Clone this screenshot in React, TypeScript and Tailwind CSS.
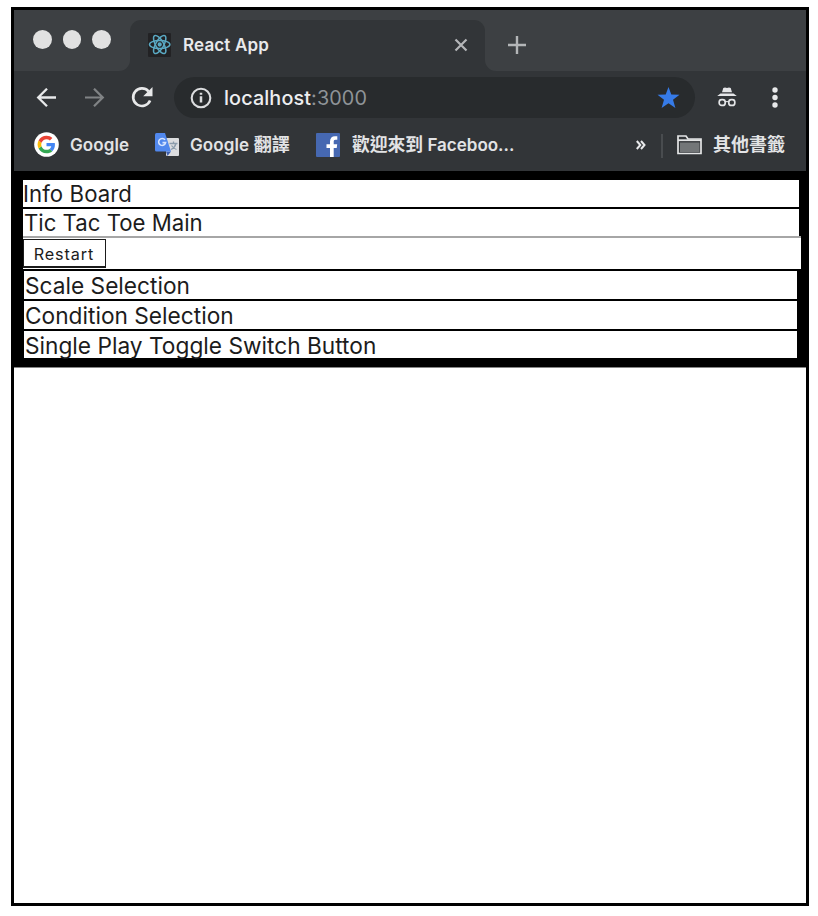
import React from "react";

function ReactLogo() {
  return (
    <svg width="23" height="24" viewBox="0 0 23 24" className="shrink-0">
      <rect width="23" height="24" rx="1" fill="#222224" />
      <g fill="none" stroke="#5aa9c3" strokeWidth="1.5" transform="translate(11.7 11.5)">
        <ellipse rx="10.2" ry="4" />
        <ellipse rx="10.2" ry="4" transform="rotate(60)" />
        <ellipse rx="10.2" ry="4" transform="rotate(120)" />
        <circle r="1.4" fill="#5aa9c3" />
      </g>
    </svg>
  );
}

function TabStrip() {
  return (
    <div className="flex h-[61px] bg-[#3d4043]">
      <div className="flex w-[116px] bg-[#323538]">
        <div className="flex h-[61px] w-[116px] gap-[11px] rounded-br-[11px] bg-[#3d4043] pl-[19px] pt-5">
          <span className="size-[18.5px] rounded-full bg-[#e1e1e1]" />
          <span className="size-[18.5px] rounded-full bg-[#e1e1e1]" />
          <span className="size-[18.5px] rounded-full bg-[#e1e1e1]" />
        </div>
      </div>
      <div className="mt-[10px] flex w-[355px] items-start rounded-t-[11px] bg-[#323538] pl-[18px] pt-[13px]">
        <ReactLogo />
        <span className="ml-3 mt-[1px] text-[17px] leading-[23px] font-semibold tracking-[0.15px] text-[#e9eaec]">React App</span>
        <svg width="14" height="14" viewBox="0 0 14 14" className="ml-auto mr-[17px] mt-[5px]" stroke="#b4b6b8" strokeWidth="2.2" fill="none">
          <path d="M1.5 1.5l11 11M12.5 1.5l-11 11" />
        </svg>
      </div>
      <div className="flex-1 bg-[#323538]">
        <div className="h-[61px] rounded-bl-[11px] bg-[#3d4043] pl-[23px] pt-[26px]">
          <svg width="18" height="18" viewBox="0 0 18 18" stroke="#b4b6b8" strokeWidth="2.4">
            <path d="M0 9h18M9 0v18" />
          </svg>
        </div>
      </div>
    </div>
  );
}

function Toolbar() {
  return (
    <div className="flex h-[53px] items-center bg-[#323538] pl-[22px]">
      <svg width="21" height="20" viewBox="0 0 21 20" fill="none" stroke="#e8e9ea" strokeWidth="2.3">
        <path d="M20 9.5H2.5M11 .7L2.2 9.5l8.8 8.8" />
      </svg>
      <svg width="21" height="20" viewBox="0 0 21 20" fill="none" stroke="#808385" strokeWidth="2.2" className="ml-[27px]">
        <path d="M1 9.5h17.5M10 .7l8.8 8.8-8.8 8.8" />
      </svg>
      <svg width="23" height="22" viewBox="0 0 23 22" fill="none" className="ml-[26px]">
        <path d="M17.5 4.3A8.8 8.8 0 1 0 19.1 13.6" stroke="#e8e9ea" strokeWidth="2.6" />
        <path d="M21.5 0v9.3h-9.3z" fill="#e8e9ea" />
      </svg>
      <div className="ml-5 flex h-[41px] w-[521px] items-center rounded-full bg-[#282b2d] pl-4">
        <svg width="22" height="22" viewBox="0 0 22 22" fill="none" stroke="#dcdddf" strokeWidth="2.1">
          <circle cx="11" cy="11" r="9.3" />
          <path d="M11 9.3v6.2M11 5.8v2" strokeWidth="2.5" />
        </svg>
        <span className="ml-[12px] text-[19.8px] leading-6 tracking-[0.12px] text-[#8f9498]">
          <span className="font-medium text-[#edeef0]">localhost</span>:3000
        </span>
        <svg width="23" height="22" viewBox="0 0 23 22" className="ml-auto mr-[15px]">
          <path d="M11.5 0l2.8 7.6 8.2.2-6.5 5 2.4 8.1-6.9-4.7-6.9 4.7L7 12.8.5 7.8l8.2-.2z" fill="#367be8" />
        </svg>
      </div>
      <svg width="20" height="21" viewBox="0 0 20 21" className="ml-[22px]" fill="none">
        <path d="M5 5.2L6.3 1 8 .5l2 .6 2-.6 1.7.5L15 5.2zM.2 9l3.3-2.500h13L19.8 9z" fill="#e5e6e8" />
        <g stroke="#e5e6e8" strokeWidth="1.7">
          <rect x="2.2" y="12.6" width="6" height="5.8" rx="2.5" />
          <rect x="11.8" y="12.6" width="6" height="5.8" rx="2.5" />
          <path d="M8 15q2-1 4 0" strokeWidth="1.2" />
        </g>
      </svg>
      <svg width="6" height="22" viewBox="0 0 6 22" fill="#e8e9ea" className="ml-[35px]">
        <circle cx="3" cy="3" r="2.7" />
        <circle cx="3" cy="10.5" r="2.7" />
        <circle cx="3" cy="18" r="2.7" />
      </svg>
    </div>
  );
}

function GoogleIcon() {
  return (
    <svg width="25" height="25" viewBox="0 0 25 25" className="shrink-0">
      <circle cx="12.5" cy="12.5" r="12.3" fill="#fff" />
      <g transform="translate(3.7 3.7) scale(.733)">
        <path fill="#4285f4" d="M23.5 12.3c0-.9-.1-1.5-.2-2.3H12v4.5h6.5c-.3 1.5-1.1 2.8-2.5 3.6l3.8 3c2.3-2.1 3.7-5.2 3.7-8.8z" />
        <path fill="#34a853" d="M12 24c3.2 0 6-1.1 7.9-2.9l-3.8-3c-1.1.7-2.4 1.2-4.1 1.2-3.1 0-5.8-2.1-6.8-5l-4 3.1C3.2 21.3 7.3 24 12 24z" />
        <path fill="#fbbc05" d="M5.2 14.3a7.2 7.2 0 0 1 0-4.6l-4-3.1a12 12 0 0 0 0 10.8z" />
        <path fill="#ea4335" d="M12 4.7c1.8 0 3.3.6 4.6 1.8L20 3.1C17.9 1.2 15.2 0 12 0 7.3 0 3.2 2.7 1.2 6.6l4 3.1c1-2.9 3.7-5 6.8-5z" />
      </g>
    </svg>
  );
}

function TranslateIcon() {
  return (
    <svg width="24" height="24" viewBox="0 0 24 24" className="shrink-0">
      <rect x="11" y="5" width="13" height="18" rx="1" fill="#dcdddf" />
      <path d="M14.5 10.5h8M18.5 8.5v2M21 10.5q-1 4-5 6M16.5 12.5q2 3 5 4" stroke="#8c9cab" strokeWidth="1.3" fill="none" />
      <path d="M11 18.5h5L12.5 23z" fill="#3e5fae" />
      <path d="M1.5 0H10l6 18.5H1.5Q0 18.5 0 17V1.5Q0 0 1.5 0z" fill="#5188ed" />
      <path d="M10 6.9A3.5 3.5 0 1 0 10.6 9.6H7.5" fill="none" stroke="#d5e4ff" strokeWidth="1.6" />
    </svg>
  );
}

function Bookmarks() {
  return (
    <div className="flex h-[47px] items-center bg-[#323538] pb-[6px] pl-[20px] text-[17px] font-semibold leading-6 whitespace-nowrap text-[#e2e3e5]">
      <div className="flex w-[121px] items-center gap-[11px]">
        <GoogleIcon />
        <span className="tracking-[0.12px]">Google</span>
      </div>
      <div className="flex w-[161px] items-center gap-[11px]">
        <TranslateIcon />
        <span className="tracking-[0.12px]">Google <span className="text-[18px] font-bold">翻譯</span></span>
      </div>
      <div className="flex items-center gap-[12px]">
        <svg width="24" height="24" viewBox="0 0 24 24" className="shrink-0">
          <rect width="24" height="24" rx="1" fill="#4668b1" />
          <path d="M14 24v-9h-3.5v-3.7H14V8.5C14 5 16 3.3 19 3.3h2.3v3.4h-1.7c-1.6 0-1.9.8-1.9 2v2.6h3.5l-.5 3.7h-3v9z" fill="#fff" />
        </svg>
        <span><span className="text-[17.8px] font-bold">歡迎來到</span> Faceboo...</span>
      </div>
      <svg width="10" height="10" viewBox="0 0 10 10" className="ml-auto" fill="none" stroke="#e9eaec" strokeWidth="2">
        <path d="M.8 1L4.3 5 .8 9M5 1l3.5 4L5 9" />
      </svg>
      <span className="ml-[15px] mt-[3px] h-6 w-[2px] bg-[#494c4f]" />
      <svg width="25" height="20" viewBox="0 0 25 20" className="ml-[14px]">
        <path d="M1 18.5V1h8l2 3h13v14.5z" fill="#323538" stroke="#e4e5e6" strokeWidth="1.7" />
        <path d="M3 7.5h19.5v9.5H3z" fill="#737678" />
        <path d="M1 5.2h23" stroke="#e4e5e6" strokeWidth="1.8" />
      </svg>
      <span className="ml-[11px] mr-[21px] text-[18px] font-bold">其他書籤</span>
    </div>
  );
}

function Page() {
  return (
    <div className="h-[196px] bg-black pt-[9px] text-[22.7px] leading-[28px] text-[#1c1c1c]">
      <div className="ml-[9px] mr-[7px] h-[27px] bg-white text-[22.2px] tracking-[0.08px]">Info Board</div>
      <div className="ml-[9px] mr-[7px] mt-[2px] h-[27px] bg-white pl-[1px] text-[22.2px]">Tic Tac Toe Main</div>
      <div className="ml-[9px] mr-[5px] h-[33px] border-t-2 border-[#a6a6a6] bg-white">
        <button className="mt-px block h-[29px] w-[83px] border border-b-2 border-[#1b1b1b] bg-white pr-[1px] text-[16.2px] leading-[28px] tracking-[0.9px]">Restart</button>
      </div>
      <div className="ml-[10px] mr-[9px] mt-[2px] h-[28px] bg-white pl-[1px] pt-[1px]">Scale Selection</div>
      <div className="ml-[10px] mr-[9px] mt-[2px] h-[28px] bg-white pl-[1px] pt-[1px]">Condition Selection</div>
      <div className="ml-[10px] mr-[9px] mt-[2px] h-[27px] bg-white pl-[1px] pt-[1px]">Single Play Toggle Switch Button</div>
    </div>
  );
}

export default function App() {
  return (
    <div className="h-[916px] w-[818px] overflow-hidden bg-white pl-[11px] pt-[7px] font-['Inter','Noto_Sans_CJK_TC',sans-serif]">
      <div className="h-[899px] w-[798px] border-[3px] border-black bg-white">
        <TabStrip />
        <Toolbar />
        <Bookmarks />
        <Page />
        <div className="h-px bg-[#858585]" />
      </div>
    </div>
  );
}
